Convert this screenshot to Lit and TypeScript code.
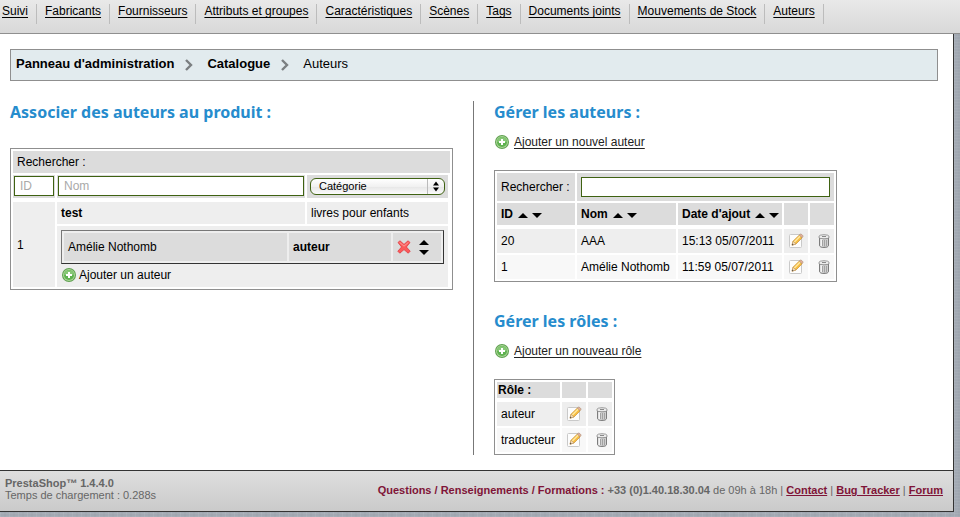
import { LitElement, html, css, svg } from "lit";
import { customElement, property } from "lit/decorators.js";

type IconName = "add" | "edit" | "trash" | "delete" | "up" | "down" | "chevron";

const ICONS = {
  add: {
    w: 14,
    h: 14,
    body: svg`
      <circle cx="7" cy="7" r="7" fill="#5ea04f"/>
      <circle cx="7" cy="7" r="6" fill="#a9d696"/>
      <circle cx="7" cy="7" r="5" fill="#5fb250"/>
      <path d="M2.2 7a4.8 4.8 0 0 1 9.6 0z" fill="#86c776"/>
      <path d="M6 4h2v2h2v2H8v2H6V8H4V6h2z" fill="#fff"/>`,
  },
  edit: {
    w: 16,
    h: 16,
    body: svg`
      <rect x="1.5" y="1.5" width="12" height="13" rx="1" fill="#fdfdfd" stroke="#c9c9c9"/>
      <path d="M4 12.200l1-4L11.400 2l2.800 2.800L8 11z" fill="#f7bd42" stroke="#c89038" stroke-width=".7"/>
      <path d="M5.800 8.600l6-6 1 .9-6 6.100z" fill="#ffe9a0"/>
      <path d="M4 12.200l1-4L8 11z" fill="#f3dcbc" stroke="#b79262" stroke-width=".5"/>
      <path d="M4 12.200l.4-1.600 1.200 1.100z" fill="#444"/>
      <path d="M11.400 2l.9-.8q.6-.4 1.200.1l1.300 1.300q.5.6 0 1.100l-.8.900z" fill="#e9b09c" stroke="#a08a70" stroke-width=".6"/>`,
  },
  trash: {
    w: 16,
    h: 14,
    body: svg`
      <path d="M5.500 4h9v7.800q-.4 1.700-4.500 1.700t-4.500-1.700z" fill="#cfcfcf" stroke="#7c7c7c"/>
      <path d="M6.500 5h2v7.500l-2-.6z" fill="#f4f4f4"/>
      <path d="M8.500 6v6M10.500 6v6.500M12.500 6v6" stroke="#a2a2a2" fill="none"/>
      <path d="M5 2.200q.5-1.400 5-1.500 4.500.1 5 1.500v1.600q-1 1-5 1t-5-1z" fill="#ececec" stroke="#858585" stroke-width=".8"/>
      <path d="M8 2.500h4" stroke="#888"/>`,
  },
  delete: {
    w: 14,
    h: 14,
    body: svg`
      <path d="M1 2.500L3 .8 7 4.400 11 .8l2 1.700L9.400 7l3.800 4.200-2 2L7 9.600l-4.200 3.600-2-2L4.600 7z" fill="#fb5a5a" stroke="#e03a40" stroke-width=".8"/>
      <path d="M2.500 2.300L7 6.200l4.500-3.900" stroke="#ff9c98" fill="none"/>`,
  },
  up: { w: 10, h: 5, body: svg`<path d="M5 0l5 5H0z"/>` },
  down: { w: 10, h: 5, body: svg`<path d="M0 0h10L5 5z"/>` },
  chevron: {
    w: 8,
    h: 12,
    body: svg`<path d="M1 1l5 5-5 5" fill="none" stroke="#7b7f81" stroke-width="2.400"/>`,
  },
};

@customElement("ps-icon")
export class PsIcon extends LitElement {
  @property() name: IconName = "add";

  static styles = css`
    :host {
      display: inline-flex;
      flex: none;
    }
    .glyph {
      display: block;
    }
  `;

  render() {
    const { w, h, body } = ICONS[this.name];
    return html`<svg class="glyph" width=${w} height=${h} viewBox="0 0 ${w} ${h}" aria-hidden="true">${body}</svg>`;
  }
}

const TABS = [
  "Suivi",
  "Fabricants",
  "Fournisseurs",
  "Attributs et groupes",
  "Caractéristiques",
  "Scènes",
  "Tags",
  "Documents joints",
  "Mouvements de Stock",
  "Auteurs",
];

const AUTHORS = [
  { id: 20, name: "AAA", added: "15:13 05/07/2011" },
  { id: 1, name: "Amélie Nothomb", added: "11:59 05/07/2011" },
];

const ROLES = ["auteur", "traducteur"];

@customElement("app-root")
export class AppRoot extends LitElement {
  static styles = css`
    :host {
      display: block;
      min-height: 100vh;
      font: 12px/16px "Liberation Sans", Arial, Helvetica, sans-serif;
      color: #000;
      background:
        repeating-linear-gradient(90deg, rgba(255, 255, 255, 0.07) 0 1px, transparent 1px 4px, rgba(0, 0, 0, 0.02) 4px 6px, transparent 6px 9px),
        repeating-linear-gradient(0deg, rgba(255, 255, 255, 0.06) 0 1px, transparent 1px 3px),
        #a2a9b3;
    }
    * {
      box-sizing: border-box;
    }
    a {
      color: inherit;
    }
    .tabs {
      display: flex;
      height: 34px;
      margin: 0;
      padding: 4px 0 0;
      list-style: none;
      background: linear-gradient(#e9e9e9, #d8d8d8);
      border-bottom: 1px solid #8f8f8f;
    }
    .tab {
      height: 20px;
      padding: 0 8px;
      line-height: 14px;
      white-space: nowrap;
      border-right: 1px solid #bcbcbc;
    }
    .tab:first-child {
      padding-left: 2px;
    }
    .tab a,
    .add {
      text-underline-offset: 2px;
    }
    .shell {
      margin-right: 6px;
      background: #fff;
      border-right: 1px solid #333;
    }
    .main {
      padding: 15px 15px 15px 10px;
    }
    .crumbs {
      display: flex;
      align-items: center;
      height: 32px;
      padding: 0 5px 2px;
      font-size: 13px;
      background: #e2ebee;
      border: 1px solid #8f8f8f;
    }
    .crumbs a {
      font-weight: bold;
      text-decoration: none;
    }
    .crumbs ps-icon {
      margin: 2px 14px 0 11px;
    }
    .columns {
      display: grid;
      grid-template-columns: 1fr 1fr;
      margin-top: 20px;
    }
    .left {
      padding-right: 20px;
      border-right: 1px solid #777;
    }
    .right {
      padding-left: 20px;
    }
    h2 {
      margin: 0;
      font: bold 16px/22px "Trebuchet MS", "Noto Sans", sans-serif;
      color: #268ccd;
    }
    .roles-title {
      margin-top: 28px;
    }
    .add {
      display: flex;
      align-items: center;
      gap: 5px;
      width: max-content;
      margin: 11px 0 20px 1px;
      color: #222;
    }
    table {
      border-collapse: separate;
      border-spacing: 2px;
      border: 1px solid #8f8f8f;
    }
    th,
    td {
      height: 24px;
      padding: 0 4px;
      text-align: left;
      white-space: nowrap;
      background: #eee;
    }
    th,
    .head td {
      height: 22px;
      background: #dcdcdc;
    }
    .plain {
      font-weight: normal;
    }
    .first td {
      height: 26px;
      border-top: 2px solid #fff;
    }
    .even td {
      background: #f8f8f8;
    }
    .products {
      width: 100%;
      margin-top: 25px;
      table-layout: fixed;
    }
    .products .filters td {
      height: 23px;
      padding: 1px 1px 2px;
    }
    .products .filters .cat {
      padding: 0 3px;
    }
    .products .last,
    .products .filters .cat {
      border-right: 2px solid #fff;
    }
    .products .first td {
      height: 24px;
    }
    .products .first .id {
      height: 87px;
    }
    .products .authors {
      padding: 4px;
    }
    .c-id {
      width: 42px;
    }
    .c-cat {
      width: 143px;
    }
    .c-role {
      width: 102px;
    }
    .c-tools {
      width: 48px;
    }
    .linked {
      width: 100%;
      table-layout: fixed;
      border-color: #777 #333 #333 #777;
    }
    .linked td {
      height: 28px;
      background: #dcdcdc;
    }
    .tools {
      display: flex;
      align-items: center;
      gap: 8px;
    }
    .order {
      display: flex;
      flex-direction: column;
      gap: 5px;
    }
    button {
      display: flex;
      align-items: center;
      padding: 0;
      font: inherit;
      color: inherit;
      background: none;
      border: 0;
      cursor: pointer;
    }
    .add-author {
      gap: 3px;
      height: 16px;
      margin: 3px 0 0 1px;
    }
    input,
    select {
      display: block;
      width: 100%;
      height: 20px;
      margin: 0;
      padding: 0 5px;
      font: inherit;
      color: #000;
      background: #fff;
      border: 1px solid #3f6212;
      border-radius: 0;
      outline: 0;
    }
    input::placeholder {
      color: #a9a9a9;
      opacity: 1;
    }
    .select {
      display: grid;
      align-items: center;
    }
    .select > * {
      grid-area: 1 / 1;
    }
    select {
      appearance: none;
      height: 17px;
      padding: 0 20px 0 8px;
      font-size: 11px;
      line-height: 15px;
      border-radius: 6px;
      background: linear-gradient(#fff, #f1f1f1 50%, #e6e6e6 51%, #fbfbfb);
    }
    .stepper {
      justify-self: end;
      width: 17px;
      height: 15px;
      margin-right: 1px;
      border-left: 1px solid #bbb;
      pointer-events: none;
    }
    .stepper svg {
      display: block;
    }
    .search td,
    .search th {
      height: 28px;
    }
    .n-id {
      width: 78px;
    }
    .n-name {
      width: 99px;
    }
    .n-date {
      width: 104px;
    }
    .n-tool {
      width: 24px;
    }
    .n-role {
      width: 63px;
    }
    .sort {
      display: flex;
      align-items: center;
      gap: 4px;
    }
    .sort button {
      padding-top: 2px;
    }
    .sort .label {
      margin-right: 1px;
    }
    .roles th {
      height: 16px;
      padding: 0 1px;
    }
    .grid {
      table-layout: fixed;
      width: 343px;
    }
    .roles {
      table-layout: fixed;
      width: 121px;
    }
    .tool {
      padding: 0;
    }
    .tool button {
      margin: auto;
    }
    .footer {
      display: flex;
      align-items: center;
      justify-content: space-between;
      height: 42px;
      padding: 0 10px 2px 5px;
      font-size: 11px;
      line-height: 12px;
      color: #666;
      background: linear-gradient(#dedede, #cacaca);
      border: solid #333;
      border-width: 1px 0;
    }
    .footer p {
      margin: 0;
    }
    .build {
      padding-bottom: 2px;
    }
    .footer a,
    .topic {
      font-weight: bold;
      color: #7f1437;
    }
  `;

  private sortable(label: string) {
    return html`<div class="sort">
      <span class="label">${label}</span>
      <button aria-label="${label} croissant"><ps-icon name="up"></ps-icon></button>
      <button aria-label="${label} décroissant"><ps-icon name="down"></ps-icon></button>
    </div>`;
  }

  private rowTools() {
    return html`<td class="tool"><button aria-label="Modifier"><ps-icon name="edit"></ps-icon></button></td>
      <td class="tool"><button aria-label="Supprimer"><ps-icon name="trash"></ps-icon></button></td>`;
  }

  private productTable() {
    return html`<table class="products">
      <colgroup><col class="c-id" /><col /><col class="c-cat" /></colgroup>
      <thead class="head">
        <tr><th class="plain" colspan="3">Rechercher :</th></tr>
        <tr class="filters">
          <td><input aria-label="ID" placeholder="ID" /></td>
          <td><input aria-label="Nom" placeholder="Nom" /></td>
          <td class="cat">
            <div class="select">
              <select aria-label="Catégorie"><option>Catégorie</option></select>
              <span class="stepper">
                <svg width="16" height="15" viewBox="0 0 16 15"><path d="M8 2.500l3 4H5zM8 12.500l3-4H5z"/></svg>
              </span>
            </div>
          </td>
        </tr>
      </thead>
      <tbody>
        <tr class="first">
          <td class="id" rowspan="2">1</td>
          <td><b>test</b></td>
          <td class="last">livres pour enfants</td>
        </tr>
        <tr>
          <td class="last authors" colspan="2">
            <table class="linked">
              <colgroup><col /><col class="c-role" /><col class="c-tools" /></colgroup>
              <tbody>
                <tr>
                  <td>Amélie Nothomb</td>
                  <td><b>auteur</b></td>
                  <td>
                    <div class="tools">
                      <button aria-label="Retirer"><ps-icon name="delete"></ps-icon></button>
                      <div class="order">
                        <button aria-label="Monter"><ps-icon name="up"></ps-icon></button>
                        <button aria-label="Descendre"><ps-icon name="down"></ps-icon></button>
                      </div>
                    </div>
                  </td>
                </tr>
              </tbody>
            </table>
            <button class="add-author"><ps-icon name="add"></ps-icon>Ajouter un auteur</button>
          </td>
        </tr>
      </tbody>
    </table>`;
  }

  private authorTable() {
    return html`<table class="grid">
      <colgroup>
        <col class="n-id" /><col class="n-name" /><col class="n-date" /><col class="n-tool" /><col class="n-tool" />
      </colgroup>
      <thead class="head">
        <tr class="search">
          <th class="plain"><label for="q">Rechercher :</label></th>
          <td colspan="4"><input id="q" type="text" /></td>
        </tr>
        <tr>
          <th>${this.sortable("ID")}</th>
          <th>${this.sortable("Nom")}</th>
          <th>${this.sortable("Date d'ajout")}</th>
          <th></th>
          <th></th>
        </tr>
      </thead>
      <tbody>
        ${AUTHORS.map(
          (a, i) => html`<tr class=${i === 0 ? "first" : "even"}>
            <td>${a.id}</td>
            <td>${a.name}</td>
            <td>${a.added}</td>
            ${this.rowTools()}
          </tr>`
        )}
      </tbody>
    </table>`;
  }

  private roleTable() {
    return html`<table class="roles">
      <colgroup><col class="n-role" /><col class="n-tool" /><col class="n-tool" /></colgroup>
      <thead>
        <tr><th>Rôle :</th><th></th><th></th></tr>
      </thead>
      <tbody>
        ${ROLES.map(
          (r, i) => html`<tr class=${i === 0 ? "first" : "even"}>
            <td>${r}</td>
            ${this.rowTools()}
          </tr>`
        )}
      </tbody>
    </table>`;
  }

  render() {
    return html`
      <nav><ul class="tabs">${TABS.map((t) => html`<li class="tab"><a href="#">${t}</a></li>`)}</ul></nav>
      <div class="shell">
        <main class="main">
          <nav class="crumbs">
            <a href="#">Panneau d'administration</a><ps-icon name="chevron"></ps-icon>
            <a href="#">Catalogue</a><ps-icon name="chevron"></ps-icon>
            <span>Auteurs</span>
          </nav>
          <div class="columns">
            <section class="left">
              <h2>Associer des auteurs au produit :</h2>
              ${this.productTable()}
            </section>
            <section class="right">
              <h2>Gérer les auteurs :</h2>
              <a class="add" href="#"><ps-icon name="add"></ps-icon>Ajouter un nouvel auteur</a>
              ${this.authorTable()}
              <h2 class="roles-title">Gérer les rôles :</h2>
              <a class="add" href="#"><ps-icon name="add"></ps-icon>Ajouter un nouveau rôle</a>
              ${this.roleTable()}
            </section>
          </div>
        </main>
        <footer class="footer">
          <div class="build">
            <p><b>PrestaShop™ 1.4.4.0</b></p>
            <p>Temps de chargement : 0.288s</p>
          </div>
          <p>
            <span class="topic">Questions / Renseignements / Formations :</span> <b>+33 (0)1.40.18.30.04</b> de 09h à 18h |
            <a href="#">Contact</a> | <a href="#">Bug Tracker</a> | <a href="#">Forum</a>
          </p>
        </footer>
      </div>
    `;
  }
}
